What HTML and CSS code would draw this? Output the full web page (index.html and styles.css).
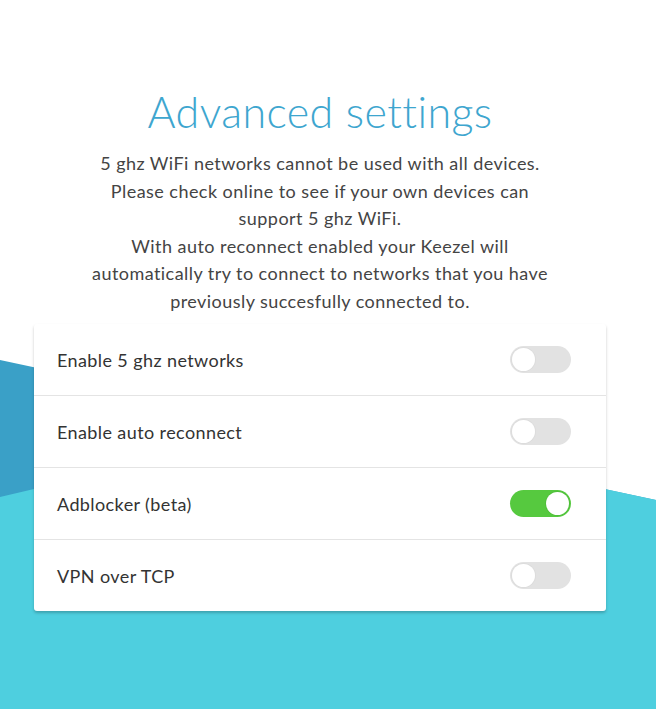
FILE: index.html
```html
<!DOCTYPE html>
<html>
<head>
<meta charset="utf-8">
<link rel="stylesheet" href="styles.css">
</head>
<body>
<div class="backdrop">
  <div class="shape-dark"></div>
  <div class="shape-cyan"></div>
</div>
<main class="page">
  <h1 class="title">Advanced settings</h1>
  <p class="intro">5 ghz WiFi networks cannot be used with all devices.<br>Please check online to see if your own devices can<br>support 5 ghz WiFi.<br>With auto reconnect enabled your Keezel will<br>automatically try to connect to networks that you have<br>previously succesfully connected to.</p>
  <section class="card">
    <div class="row"><span class="label">Enable 5 ghz networks</span><span class="toggle"><span class="knob"></span></span></div>
    <div class="row"><span class="label">Enable auto reconnect</span><span class="toggle"><span class="knob"></span></span></div>
    <div class="row"><span class="label">Adblocker (beta)</span><span class="toggle on"><span class="knob"></span></span></div>
    <div class="row"><span class="label">VPN over TCP</span><span class="toggle"><span class="knob"></span></span></div>
  </section>
</main>
</body>
</html>
```
FILE: styles.css
```css
html, body {
  margin: 0;
  padding: 0;
  background: #ffffff;
  height: 100%;
  overflow: hidden;
}
body {
  font-family: "Lato", "Open Sans", sans-serif;
  color: #444444;
  position: relative;
}
.backdrop {
  position: absolute;
  left: 0;
  top: 0;
  width: 656px;
  height: 709px;
  z-index: 0;
}
.shape-dark, .shape-cyan {
  position: absolute;
  inset: 0;
}
.shape-dark {
  background: #3aa0c7;
  clip-path: polygon(0 360px, 656px 500px, 656px 709px, 0 709px);
}
.shape-cyan {
  background: #4ecfdf;
  clip-path: polygon(0 497px, 306px 425px, 656px 500px, 656px 709px, 0 709px);
}
.page {
  position: relative;
  z-index: 1;
  width: 640px;
  display: flex;
  flex-direction: column;
  align-items: center;
  padding-top: 87px;
}
.title {
  margin: 0;
  font-size: 43px;
  line-height: 50px;
  font-weight: 300;
  color: #3ea6cf;
  letter-spacing: 0.4px;
}
.intro {
  margin: 13px 0 0;
  font-size: 18px;
  line-height: 27.5px;
  letter-spacing: 0.45px;
  text-align: center;
  color: #444444;
  white-space: nowrap;
}
.card {
  margin-top: 9px;
  width: 572px;
  background: #ffffff;
  border-radius: 3px;
  box-shadow: 0 2px 3px rgba(0, 0, 0, 0.22);
  display: flex;
  flex-direction: column;
}
.row {
  height: 71px;
  display: flex;
  align-items: center;
  justify-content: space-between;
  padding: 0 35px 0 23px;
  border-top: 1px solid #e4e4e4;
}
.row:first-child {
  border-top: none;
}
.label {
  font-size: 18px;
  letter-spacing: 0.4px;
  color: #333333;
}
.toggle {
  width: 61px;
  height: 27px;
  border-radius: 14px;
  background: #e2e2e2;
  display: flex;
  align-items: center;
  padding: 0 2px;
  box-sizing: border-box;
}
.knob {
  width: 23px;
  height: 23px;
  border-radius: 50%;
  background: #ffffff;
  box-shadow: 0 0 0 1px #dcdcdc;
}
.toggle.on {
  background: #56c93f;
  justify-content: flex-end;
}
.toggle.on .knob {
  box-shadow: 0 0 0 1px #4fbf3a;
}
```
